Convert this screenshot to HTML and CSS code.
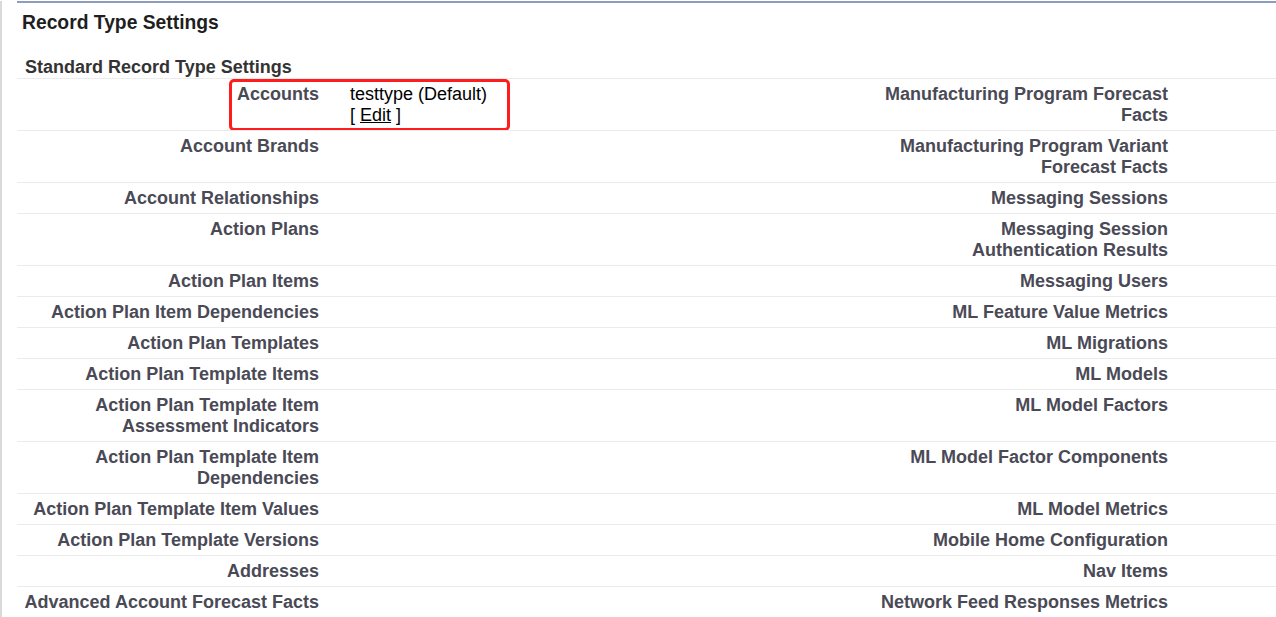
FILE: index.html
```html
<!DOCTYPE html>
<html>
<head>
<meta charset="utf-8">
<title>Record Type Settings</title>
<link rel="stylesheet" href="styles.css">
</head>
<body>
<div class="page">
  <div class="section">
    <h2 class="title">Record Type Settings</h2>
    <h3 class="subheader">Standard Record Type Settings</h3>
    <div class="list">
      <div class="row">
        <div class="label">Accounts</div>
        <div class="data">testtype (Default)<br>[ <a href="#" class="link">Edit</a> ]</div>
        <div class="label label-right">Manufacturing Program Forecast Facts</div>
        <div class="data"></div>
        <div class="highlight"></div>
      </div>
      <div class="row">
        <div class="label">Account Brands</div>
        <div class="data"></div>
        <div class="label label-right">Manufacturing Program Variant Forecast Facts</div>
        <div class="data"></div>
      </div>
      <div class="row">
        <div class="label">Account Relationships</div>
        <div class="data"></div>
        <div class="label label-right">Messaging Sessions</div>
        <div class="data"></div>
      </div>
      <div class="row">
        <div class="label">Action Plans</div>
        <div class="data"></div>
        <div class="label label-right">Messaging Session Authentication Results</div>
        <div class="data"></div>
      </div>
      <div class="row">
        <div class="label">Action Plan Items</div>
        <div class="data"></div>
        <div class="label label-right">Messaging Users</div>
        <div class="data"></div>
      </div>
      <div class="row">
        <div class="label">Action Plan Item Dependencies</div>
        <div class="data"></div>
        <div class="label label-right">ML Feature Value Metrics</div>
        <div class="data"></div>
      </div>
      <div class="row">
        <div class="label">Action Plan Templates</div>
        <div class="data"></div>
        <div class="label label-right">ML Migrations</div>
        <div class="data"></div>
      </div>
      <div class="row">
        <div class="label">Action Plan Template Items</div>
        <div class="data"></div>
        <div class="label label-right">ML Models</div>
        <div class="data"></div>
      </div>
      <div class="row">
        <div class="label">Action Plan Template Item Assessment Indicators</div>
        <div class="data"></div>
        <div class="label label-right">ML Model Factors</div>
        <div class="data"></div>
      </div>
      <div class="row">
        <div class="label">Action Plan Template Item Dependencies</div>
        <div class="data"></div>
        <div class="label label-right">ML Model Factor Components</div>
        <div class="data"></div>
      </div>
      <div class="row">
        <div class="label">Action Plan Template Item Values</div>
        <div class="data"></div>
        <div class="label label-right">ML Model Metrics</div>
        <div class="data"></div>
      </div>
      <div class="row">
        <div class="label">Action Plan Template Versions</div>
        <div class="data"></div>
        <div class="label label-right">Mobile Home Configuration</div>
        <div class="data"></div>
      </div>
      <div class="row">
        <div class="label">Addresses</div>
        <div class="data"></div>
        <div class="label label-right">Nav Items</div>
        <div class="data"></div>
      </div>
      <div class="row">
        <div class="label">Advanced Account Forecast Facts</div>
        <div class="data"></div>
        <div class="label label-right">Network Feed Responses Metrics</div>
        <div class="data"></div>
      </div>
    </div>
  </div>
</div>
</body>
</html>
```
FILE: styles.css
```css
html, body {
  margin: 0;
  padding: 0;
  background: #ffffff;
}

body {
  font-family: "Liberation Sans", Arial, sans-serif;
  font-size: 18px;
  line-height: 21px;
  color: #000;
  overflow: hidden;
}

.page {
  border-left: 2px solid #dadada;
  padding-left: 15px;
  min-height: 100vh;
  box-sizing: border-box;
}

.section {
  margin-top: 1px;
  border-top: 2px solid #8e9dbe;
}

.title {
  margin: 0;
  padding: 8px 0 0 5px;
  font-size: 19.3px;
  line-height: 23px;
  font-weight: bold;
  color: #1f1f1f;
}

.subheader {
  margin: 0;
  padding: 23px 0 0 8px;
  font-size: 18px;
  line-height: 21px;
  font-weight: bold;
  color: #333333;
}

.list {
  display: flex;
  flex-direction: column;
}

.row {
  position: relative;
  display: grid;
  grid-template-columns: 314px 535px 314px 1fr;
  border-top: 1px solid #ebebeb;
}

.label {
  padding: 5px 12px 4px 2px;
  text-align: right;
  font-weight: bold;
  color: #4a4a56;
}

.label-right {
  padding-left: 10px;
}

.data {
  padding: 5px 2px 4px 19px;
  color: #000;
}

.link {
  color: #000;
  text-decoration: underline;
}

.highlight {
  position: absolute;
  left: 212px;
  top: 0;
  width: 281px;
  height: 52px;
  box-sizing: border-box;
  border: 3px solid #ff1c1c;
  border-radius: 5px;
  pointer-events: none;
}
```
